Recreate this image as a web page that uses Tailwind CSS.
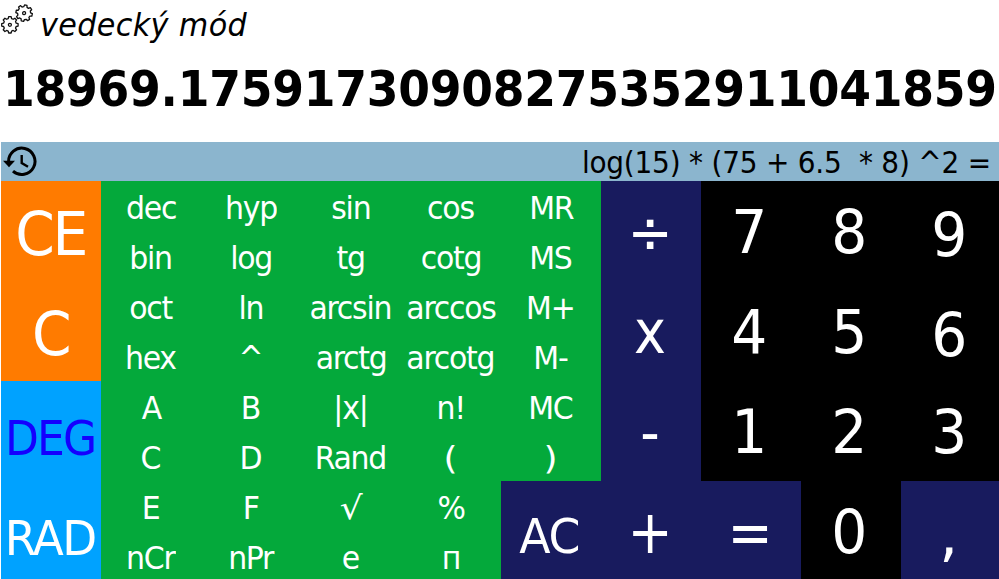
<!DOCTYPE html>
<html lang="sk">
<head>
<meta charset="utf-8">
<title>Kalkulačka</title>
<script src="https://cdn.jsdelivr.net/npm/@tailwindcss/browser@4"></script>
</head>
<body class="w-[999px] h-[579px] overflow-hidden bg-white text-black font-['DejaVu_Sans_Condensed','DejaVu_Sans',sans-serif] [font-stretch:condensed]">
<header class="flex h-[50px]">
  <svg class="w-[40px] h-[41px] shrink-0" viewBox="0 0 40 41" fill="none" stroke="#111" stroke-width="1.4" stroke-linejoin="round">
    <g transform="translate(9.9 24.8) scale(.94)">
      <path d="M-1.3-8.6H1.3L1.8-6.6 3.5-5.9 5.3-7 7.1-5.2 6-3.5 6.7-1.7 8.7-1.3V1.3L6.7 1.8 6 3.5 7.1 5.3 5.3 7.1 3.5 6 1.8 6.7 1.3 8.7H-1.3L-1.8 6.7-3.5 6-5.3 7.1-7.1 5.3-6 3.5-6.7 1.8-8.7 1.3V-1.3L-6.7-1.7-6-3.5-7.1-5.2-5.3-7-3.5-5.9-1.8-6.6Z"/>
      <circle r="1.6"/>
    </g>
    <g transform="translate(24.1 13.1) rotate(12) scale(.94)">
      <path d="M-1.3-8.6H1.3L1.8-6.6 3.5-5.9 5.3-7 7.1-5.2 6-3.5 6.7-1.7 8.7-1.3V1.3L6.7 1.8 6 3.5 7.1 5.3 5.3 7.1 3.5 6 1.8 6.7 1.3 8.7H-1.3L-1.8 6.7-3.5 6-5.3 7.1-7.1 5.3-6 3.5-6.7 1.8-8.7 1.3V-1.3L-6.7-1.7-6-3.5-7.1-5.2-5.3-7-3.5-5.9-1.8-6.6Z"/>
      <circle r="1.6"/>
    </g>
  </svg>
  <h1 class="origin-left scale-x-[1.05] text-[32px] italic leading-[50px] tracking-[0.35px] whitespace-nowrap">vedecký mód</h1>
</header>
<div class="h-[92px] origin-left scale-x-[1.035] pl-[3px] pt-[2px] text-[49px] leading-[76px] font-bold tracking-[-0.24px] whitespace-nowrap">18969.17591730908275352911041859</div>
<div class="ml-px flex h-[39px] justify-between bg-[#8bb5ce]">
  <svg class="ml-[2px] mt-[4px] h-[33px] w-[36px]" viewBox="0 0 36 33" fill="none" stroke="#000" stroke-width="3">
    <path d="M5.6 15.7A13.2 13.2 0 1 1 10 25.2"/>
    <path d="M0 14.8H12L6 21.2Z" fill="#000" stroke="none"/>
    <path d="M18.7 9V17L25 20.8" stroke-width="2.4"/>
  </svg>
  <div class="origin-right scale-x-[1.035] pr-[8px] text-[30px] leading-[42px] tracking-[-0.2px] whitespace-pre">log(15) * (75 + 6.5  * 8) ^2 =</div>
</div>
<main id="keys" class="ml-px grid w-[1000px] grid-cols-[repeat(10,100px)] grid-rows-[repeat(8,50px)] text-center text-white whitespace-nowrap"></main>
<script>
  const small = 'bg-[#04a93b] h-[50px] pr-[0.5px] text-[32px] leading-[54px] tracking-[-1.2px] *:scale-x-[1.04]';
  const wide = 'bg-[#04a93b] h-[50px] text-[32px] leading-[54px] *:scale-x-[1.25]';
  const orange = 'bg-[#ff7b00] row-span-2 h-[100px] pr-[1px] text-[60px] leading-[106px] tracking-[-2.4px] *:scale-x-[1.05]';
  const angle = 'bg-[#00a2ff] row-span-2 h-[100px] pr-[1px] text-[48px] leading-[115px] tracking-[-1.9px] *:scale-x-[1.02]';
  const angleWide = 'bg-[#00a2ff] row-span-2 h-[100px] pr-[2px] text-[48px] leading-[115px] tracking-[-1.5px] *:scale-x-[1.05]';
  const digit = 'bg-black row-span-2 h-[100px] pr-[3px] text-[60px] leading-[103px] *:scale-x-[1.05]';
  const digitLow = 'bg-black row-span-2 h-[100px] pr-[3px] text-[60px] leading-[108px] *:scale-x-[1.05]';
  const op = 'bg-[#181b5e] row-span-2 h-[100px] pr-[2px] text-[60px] leading-[103px]';
  const comma = 'bg-[#181b5e] row-span-2 h-[100px] pr-[4px] text-[60px] leading-[106px] *:scale-x-[1.1]';
  const clear = 'bg-[#181b5e] row-span-2 h-[100px] pr-[3px] text-[48px] leading-[111px] tracking-[-1.2px] *:scale-x-[1.06]';
  const keys = [
    ['CE', orange], ['dec', small], ['hyp', small], ['sin', small], ['cos', small], ['MR', small], ['÷', op], ['7', digit], ['8', digit], ['9', digitLow],
    ['bin', small], ['log', small], ['tg', small], ['cotg', small], ['MS', small],
    ['C', orange], ['oct', small], ['ln', small], ['arcsin', small], ['arccos', small], ['M+', small], ['x', op], ['4', digit], ['5', digit], ['6', digitLow],
    ['hex', small], ['^', small], ['arctg', small], ['arcotg', small], ['M-', small],
    ['DEG', angle + ' text-[#1400ff]'], ['A', small], ['B', small], ['|x|', small], ['n!', small], ['MC', small], ['-', op], ['1', digit], ['2', digit], ['3', digit],
    ['C', small], ['D', small], ['Rand', small], ['(', wide], [')', wide],
    ['RAD', angleWide], ['E', small], ['F', small], ['√', wide], ['%', small], ['AC', clear], ['+', op], ['=', op], ['0', digit], [',', comma],
    ['nCr', small], ['nPr', small], ['e', small], ['п', small]
  ];
  const grid = document.getElementById('keys');
  for (const [label, cls] of keys) {
    const key = document.createElement('div');
    const text = document.createElement('span');
    key.className = cls;
    text.className = 'inline-block';
    text.textContent = label;
    key.append(text);
    grid.append(key);
  }
</script>
</body>
</html>
